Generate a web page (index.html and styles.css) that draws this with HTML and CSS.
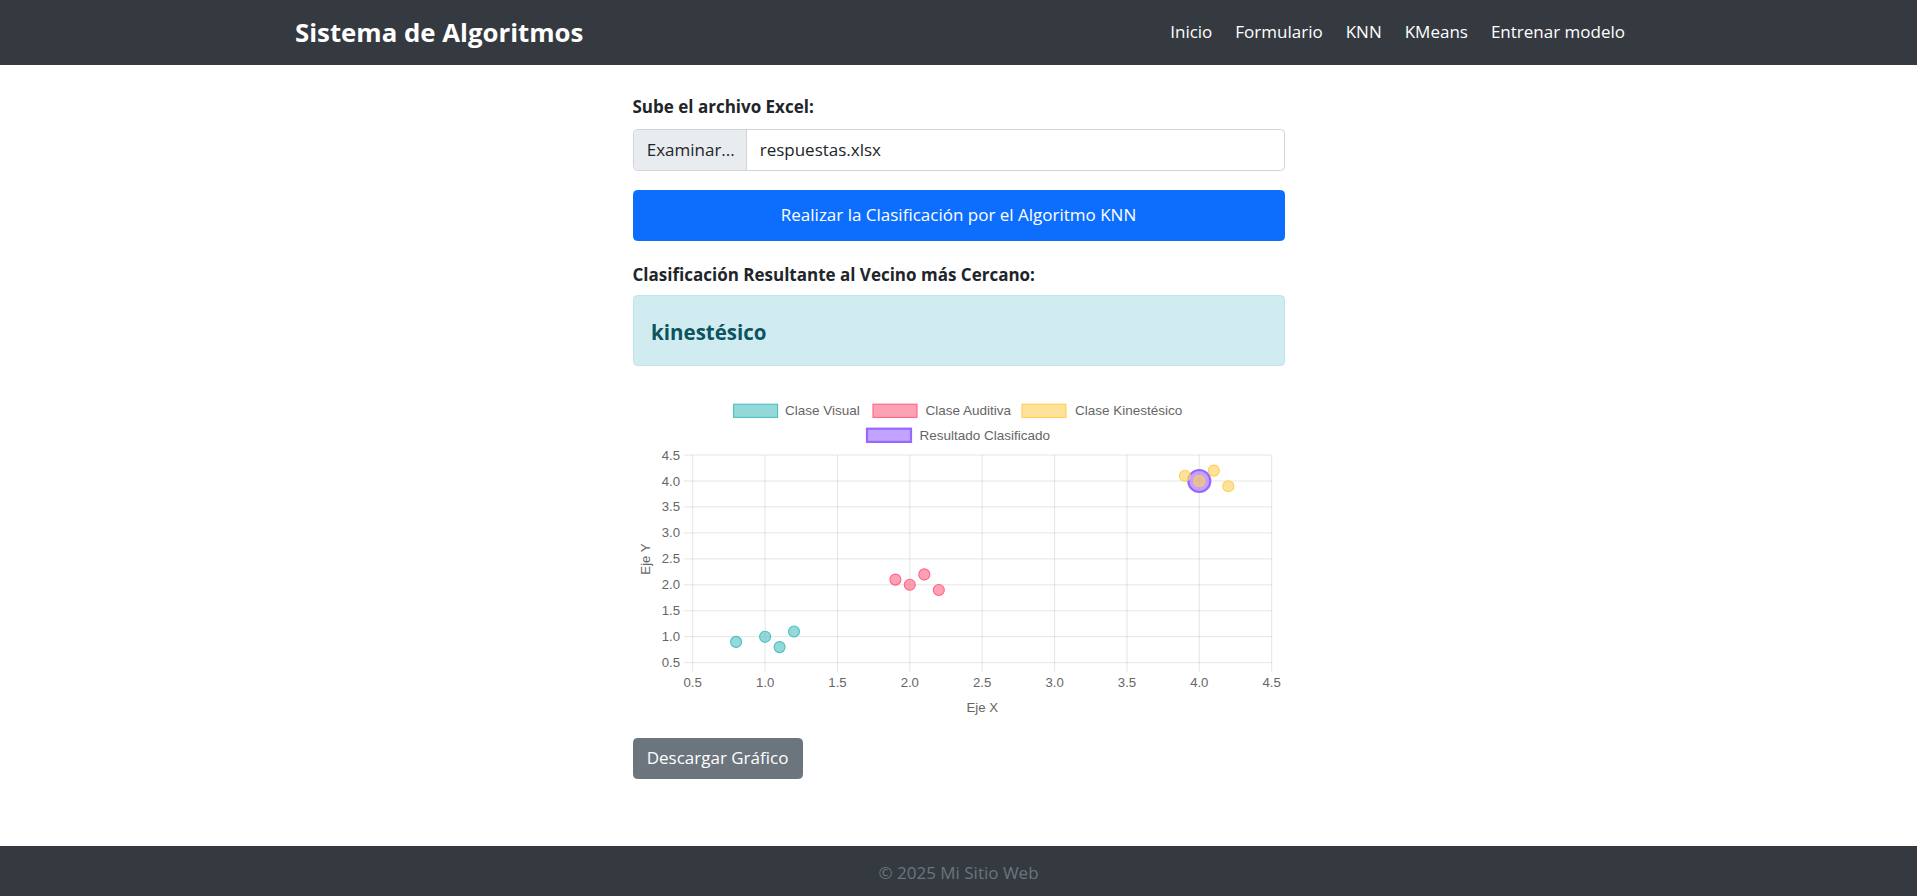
FILE: index.html
```html
<!DOCTYPE html>
<html lang="es">
<head>
<meta charset="utf-8">
<title>Sistema de Algoritmos</title>
<link rel="stylesheet" href="styles.css">
</head>
<body>
<header class="navbar">
  <div class="nav-container">
    <a class="brand" href="#">Sistema de Algoritmos</a>
    <nav class="nav-links">
      <a href="#">Inicio</a>
      <a href="#">Formulario</a>
      <a href="#">KNN</a>
      <a href="#">KMeans</a>
      <a href="#">Entrenar modelo</a>
    </nav>
  </div>
</header>
<main class="main">
  <div class="column">
    <label class="form-label">Sube el archivo Excel:</label>
    <div class="file-input">
      <span class="file-btn">Examinar...</span>
      <span class="file-name">respuestas.xlsx</span>
    </div>
    <button class="btn btn-primary">Realizar la Clasificación por el Algoritmo KNN</button>
    <div class="result-label">Clasificación Resultante al Vecino más Cercano:</div>
    <div class="alert"><h5 class="alert-title">kinestésico</h5></div>
    <div class="chart">
      <svg class="chart-svg" width="652" height="336" viewBox="0 0 652 336" xmlns="http://www.w3.org/2000/svg">
        <g class="legend">
          <rect x="100.6" y="20.2" width="44" height="13.2" fill="rgba(75,192,192,0.6)" stroke="rgb(75,192,192)" stroke-width="1.1"/>
          <text x="152" y="26.8">Clase Visual</text>
          <rect x="240" y="20.2" width="44" height="13.2" fill="rgba(255,99,132,0.6)" stroke="rgb(255,99,132)" stroke-width="1.1"/>
          <text x="292.5" y="26.8">Clase Auditiva</text>
          <rect x="389" y="20.2" width="44" height="13.2" fill="rgba(255,206,86,0.6)" stroke="rgb(255,206,86)" stroke-width="1.1"/>
          <text x="442" y="26.8">Clase Kinestésico</text>
          <rect x="234" y="44.7" width="44" height="13.2" fill="rgba(153,102,255,0.6)" stroke="rgb(153,102,255)" stroke-width="2.2"/>
          <text x="286.5" y="51.3">Resultado Clasificado</text>
        </g>
        <g class="grid" stroke="rgba(0,0,0,0.1)" stroke-width="1">
          <line x1="59.7" y1="71" x2="59.7" y2="287.7"/>
          <line x1="132.1" y1="71" x2="132.1" y2="287.7"/>
          <line x1="204.5" y1="71" x2="204.5" y2="287.7"/>
          <line x1="276.8" y1="71" x2="276.8" y2="287.7"/>
          <line x1="349.2" y1="71" x2="349.2" y2="287.7"/>
          <line x1="421.6" y1="71" x2="421.6" y2="287.7"/>
          <line x1="494" y1="71" x2="494" y2="287.7"/>
          <line x1="566.3" y1="71" x2="566.3" y2="287.7"/>
          <line x1="638.7" y1="71" x2="638.7" y2="287.7"/>
          <line x1="50.9" y1="71" x2="638.7" y2="71"/>
          <line x1="50.9" y1="97" x2="638.7" y2="97"/>
          <line x1="50.9" y1="122.9" x2="638.7" y2="122.9"/>
          <line x1="50.9" y1="148.9" x2="638.7" y2="148.9"/>
          <line x1="50.9" y1="174.9" x2="638.7" y2="174.9"/>
          <line x1="50.9" y1="200.8" x2="638.7" y2="200.8"/>
          <line x1="50.9" y1="226.8" x2="638.7" y2="226.8"/>
          <line x1="50.9" y1="252.7" x2="638.7" y2="252.7"/>
          <line x1="50.9" y1="278.7" x2="638.7" y2="278.7"/>
        </g>
        <g class="yticks">
          <text x="47" y="71">4.5</text>
          <text x="47" y="97">4.0</text>
          <text x="47" y="122.9">3.5</text>
          <text x="47" y="148.9">3.0</text>
          <text x="47" y="174.9">2.5</text>
          <text x="47" y="200.8">2.0</text>
          <text x="47" y="226.8">1.5</text>
          <text x="47" y="252.7">1.0</text>
          <text x="47" y="278.7">0.5</text>
        </g>
        <g class="xticks">
          <text x="59.7" y="298.7">0.5</text>
          <text x="132.1" y="298.7">1.0</text>
          <text x="204.5" y="298.7">1.5</text>
          <text x="276.8" y="298.7">2.0</text>
          <text x="349.2" y="298.7">2.5</text>
          <text x="421.6" y="298.7">3.0</text>
          <text x="494" y="298.7">3.5</text>
          <text x="566.3" y="298.7">4.0</text>
          <text x="638.7" y="298.7">4.5</text>
        </g>
        <text class="axis-title" transform="translate(12 175) rotate(-90)">Eje Y</text>
        <text class="axis-title" x="349.2" y="323">Eje X</text>
        <g class="points">
          <circle cx="566.3" cy="97" r="11" fill="rgba(153,102,255,0.6)" stroke="rgb(153,102,255)" stroke-width="2.2"/>
          <g fill="rgba(255,206,86,0.6)" stroke="rgb(255,206,86)" stroke-width="1.1">
            <circle cx="551.9" cy="91.8" r="5.5"/>
            <circle cx="566.3" cy="97" r="5.5"/>
            <circle cx="580.8" cy="86.6" r="5.5"/>
            <circle cx="595.3" cy="102.2" r="5.5"/>
          </g>
          <g fill="rgba(255,99,132,0.6)" stroke="rgb(255,99,132)" stroke-width="1.1">
            <circle cx="262.4" cy="195.6" r="5.5"/>
            <circle cx="276.8" cy="200.8" r="5.5"/>
            <circle cx="291.3" cy="190.4" r="5.5"/>
            <circle cx="305.8" cy="206" r="5.5"/>
          </g>
          <g fill="rgba(75,192,192,0.6)" stroke="rgb(75,192,192)" stroke-width="1.1">
            <circle cx="103.1" cy="257.9" r="5.5"/>
            <circle cx="132.1" cy="252.7" r="5.5"/>
            <circle cx="146.6" cy="263.1" r="5.5"/>
            <circle cx="161" cy="247.5" r="5.5"/>
          </g>
        </g>
      </svg>
    </div>
    <button class="btn btn-secondary">Descargar Gráfico</button>
  </div>
</main>
<footer class="footer">© 2025 Mi Sitio Web</footer>
</body>
</html>
```

FILE: styles.css
```css
html, body {
  margin: 0;
  padding: 0;
}

body {
  font-family: "Open Sans", "Noto Sans", sans-serif;
  font-size: 17px;
  line-height: 26.4px;
  color: #212529;
  background: #fff;
}

.navbar {
  background: #343a40;
  height: 65px;
}

.nav-container {
  width: 1356px;
  height: 100%;
  margin: 0 auto;
  display: flex;
  align-items: center;
  justify-content: space-between;
}

.brand {
  margin-left: 14.5px;
  font-size: 25.8px;
  font-weight: 700;
  color: #fff;
  text-decoration: none;
}

.nav-links {
  display: flex;
}

.nav-links a {
  padding: 0 11.5px;
  color: #fff;
  text-decoration: none;
}

.main {
  padding: 28.8px 0 67px;
}

.column {
  width: 652px;
  margin: 0 auto;
  display: flex;
  flex-direction: column;
  align-items: flex-start;
}

.form-label {
  display: block;
  font-weight: 700;
  margin-bottom: 8.8px;
}

.file-input {
  width: 100%;
  height: 42px;
  box-sizing: border-box;
  border: 1px solid #ced4da;
  border-radius: 4.4px;
  display: flex;
  overflow: hidden;
  margin-bottom: 18.5px;
}

.file-btn {
  width: 113px;
  box-sizing: border-box;
  background: #e9ecef;
  border-right: 1px solid #ced4da;
  padding: 0 13.2px;
  display: flex;
  align-items: center;
  white-space: nowrap;
}

.file-name {
  padding-left: 13.2px;
  display: flex;
  align-items: center;
}

.btn {
  font-family: inherit;
  font-size: 17px;
  line-height: 26.4px;
  color: #fff;
  border-radius: 4.4px;
  cursor: pointer;
}

.btn-primary {
  width: 100%;
  height: 51.7px;
  background: #0d6efd;
  border: 1px solid #0d6efd;
  margin-bottom: 20.8px;
}

.result-label {
  font-weight: 700;
  margin-bottom: 7px;
}

.alert {
  width: 100%;
  box-sizing: border-box;
  background: #d1ecf1;
  border: 1px solid #bee5eb;
  color: #0c5460;
  border-radius: 4.4px;
  padding: 22.6px 17.6px 17.6px;
  margin-bottom: 17.6px;
}

.alert-title {
  margin: 0 0 2px;
  font-size: 20.5px;
  line-height: 26.4px;
  font-weight: 700;
}

.chart {
  width: 652px;
  height: 336px;
  margin-bottom: 18px;
}

.chart-svg {
  display: block;
  font-family: "Liberation Sans", Arial, sans-serif;
  font-size: 13.2px;
}

.chart-svg text {
  fill: #666;
  dominant-baseline: central;
}

.legend text {
  font-size: 13.5px;
}

.yticks text {
  text-anchor: end;
}

.xticks text,
.axis-title {
  text-anchor: middle;
}

.btn-secondary {
  background: #6c757d;
  border: 1px solid #6c757d;
  padding: 6.6px 13.2px;
}

.footer {
  background: #343a40;
  color: #6c757d;
  text-align: center;
  padding: 14px 0 21px;
}
```
